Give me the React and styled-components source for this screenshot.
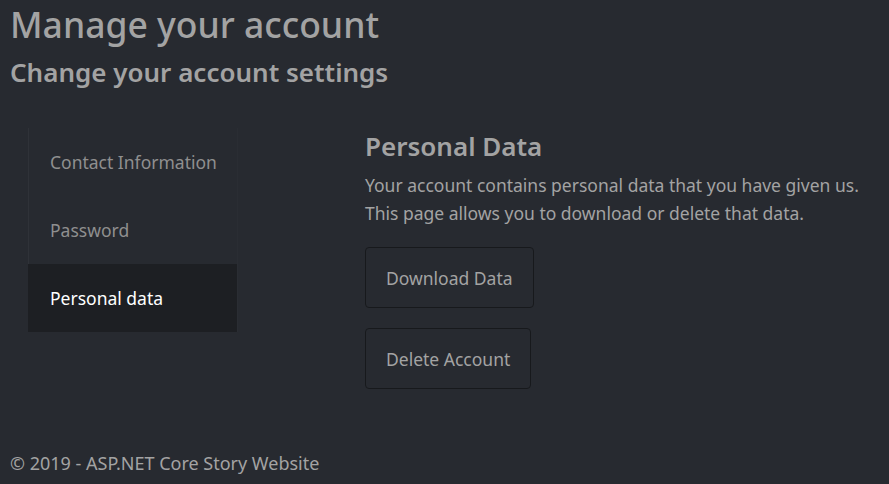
import React from 'react'
import styled, { createGlobalStyle } from 'styled-components'

const GlobalStyle = createGlobalStyle`
  html, body {
    margin: 0;
    padding: 0;
    background: #272a30;
    color: #a3a3a3;
    font-family: "Noto Sans", "Open Sans", sans-serif;
    font-size: 17.5px;
  }
`

const Page = styled.div`
  width: 889px;
  height: 484px;
  padding: 0 10px;
  box-sizing: border-box;
  display: flex;
  flex-direction: column;
`

const Title = styled.h1`
  margin: 0;
  font-size: 35.5px;
  font-weight: 500;
  line-height: 48px;
  color: #a3a3a3;
`

const Subtitle = styled.h2`
  margin: 0;
  font-size: 26px;
  font-weight: 600;
  line-height: 48px;
  color: #a3a3a3;
`

const Body = styled.div`
  display: grid;
  grid-template-columns: 210px 1fr;
  column-gap: 127px;
  margin-top: 32px;
  padding-left: 18px;
`

const Nav = styled.nav`
  display: flex;
  flex-direction: column;
  align-self: start;
  border-right: 1px solid #2a2d33;
`

const NavItem = styled.a`
  display: flex;
  align-items: center;
  height: 68px;
  padding-left: 22px;
  font-size: 17.5px;
  text-decoration: none;
  box-shadow: inset 1px 0 0 ${p => (p.$active ? 'transparent' : '#2f3238')};
  color: ${p => (p.$active ? '#ffffff' : '#8f8f8f')};
  background: ${p => (p.$active ? '#1d1f23' : 'transparent')};
`

const Content = styled.section`
  display: flex;
  flex-direction: column;
  align-items: flex-start;
`

const Heading = styled.h3`
  margin: -2px 0 5px;
  font-size: 26px;
  font-weight: 600;
  line-height: 40px;
  color: #a3a3a3;
`

const Text = styled.p`
  margin: 0 0 20px;
  font-size: 17.5px;
  line-height: 28px;
`

const Button = styled.button`
  height: 61px;
  padding: 0 20px;
  margin-bottom: 20px;
  background: transparent;
  border: 1px solid #17191c;
  border-radius: 4px;
  color: #a3a3a3;
  font-family: inherit;
  font-size: 17.5px;
`

const Footer = styled.footer`
  margin-top: auto;
  padding-bottom: 9px;
  font-size: 18px;
  line-height: 24px;
`

export default function App() {
  return (
    <>
      <GlobalStyle />
      <Page>
        <Title>Manage your account</Title>
        <Subtitle>Change your account settings</Subtitle>
        <Body>
          <Nav>
            <NavItem href="#">Contact Information</NavItem>
            <NavItem href="#">Password</NavItem>
            <NavItem href="#" $active>Personal data</NavItem>
          </Nav>
          <Content>
            <Heading>Personal Data</Heading>
            <Text>
              Your account contains personal data that you have given us.
              <br />
              This page allows you to download or delete that data.
            </Text>
            <Button>Download Data</Button>
            <Button>Delete Account</Button>
          </Content>
        </Body>
        <Footer>© 2019 - ASP.NET Core Story Website</Footer>
      </Page>
    </>
  )
}
